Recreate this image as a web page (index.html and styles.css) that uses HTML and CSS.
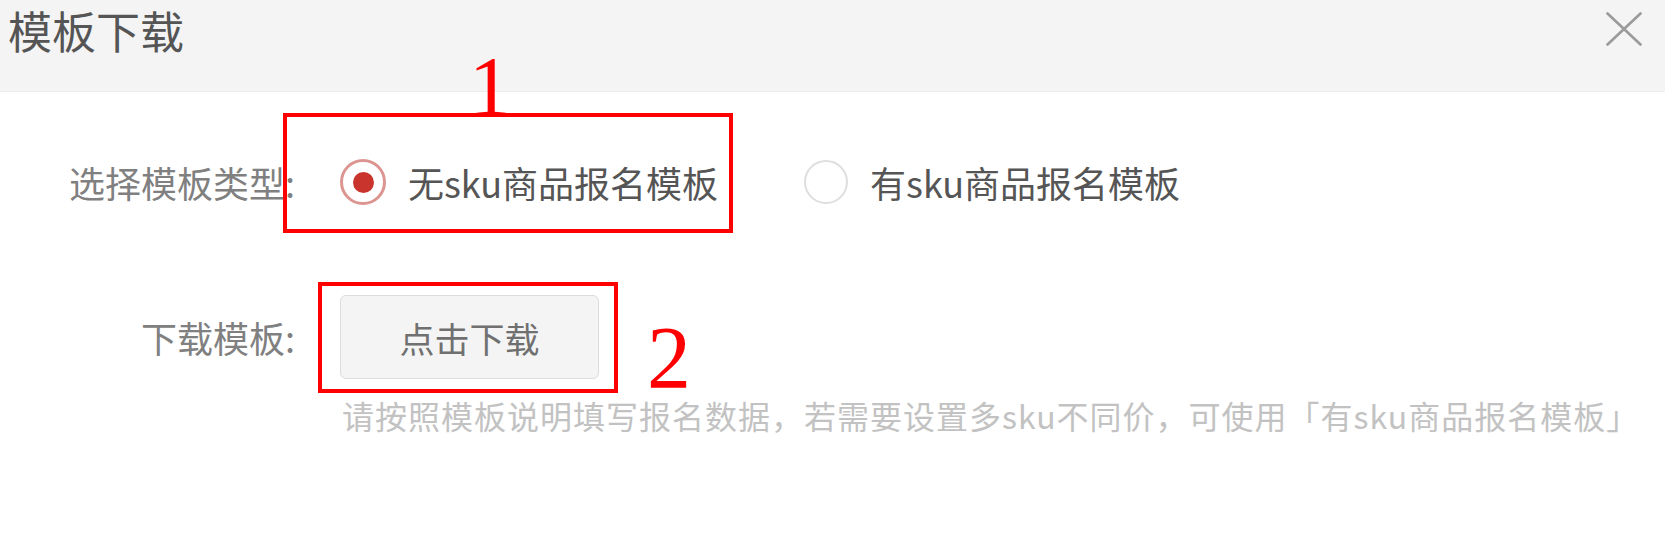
FILE: index.html
```html
<!DOCTYPE html>
<html lang="zh-CN">
<head>
<meta charset="utf-8">
<title>模板下载</title>
<link rel="stylesheet" href="styles.css">
</head>
<body>
<div class="dialog">
  <div class="dialog-header">
    <h1 class="dialog-title">模板下载</h1>
    <button class="close-btn" aria-label="关闭">
      <svg width="36" height="34" viewBox="0 0 36 34"><path d="M1.5 1.5 L34.5 32.5 M34.5 1.5 L1.5 32.5" stroke="#9a9a9a" stroke-width="2.6" fill="none" stroke-linecap="round"/></svg>
    </button>
  </div>
  <div class="dialog-body">
    <div class="form-row row-type">
      <div class="form-label">选择模板类型:</div>
      <div class="form-control radios">
        <label class="radio checked"><span class="radio-circle"><span class="radio-dot"></span></span><span class="radio-text">无sku商品报名模板</span></label>
        <label class="radio"><span class="radio-circle"></span><span class="radio-text">有sku商品报名模板</span></label>
      </div>
    </div>
    <div class="form-row row-download">
      <div class="form-label">下载模板:</div>
      <div class="form-control">
        <button class="download-btn">点击下载</button>
      </div>
    </div>
    <div class="hint">请按照模板说明填写报名数据，若需要设置多sku不同价，可使用「有sku商品报名模板」</div>
  </div>

  <div class="mark-box mark-box-1"></div>
  <div class="mark-num mark-num-1">1</div>
  <div class="mark-box mark-box-2"></div>
  <div class="mark-num mark-num-2">2</div>
</div>
</body>
</html>
```

FILE: styles.css
```css
html, body {
  margin: 0;
  padding: 0;
  background: #ffffff;
}

body {
  font-family: "Noto Sans CJK SC", "Noto Sans", sans-serif;
  color: #555;
}

.dialog {
  position: relative;
  width: 1665px;
  height: 537px;
  overflow: hidden;
}

.dialog-header {
  height: 92px;
  background: #f4f4f4;
  border-bottom: 1px solid #ededed;
  box-sizing: border-box;
  display: flex;
  justify-content: space-between;
  align-items: flex-start;
  padding: 0 23px 0 8px;
}

.dialog-title {
  margin: 0;
  font-size: 44px;
  line-height: 60px;
  font-weight: 400;
  color: #555;
}

.close-btn {
  margin-top: 12px;
  padding: 0;
  border: 0;
  background: none;
  width: 36px;
  height: 34px;
  display: block;
}

.close-btn svg {
  display: block;
}

.dialog-body {
  padding-top: 60px;
}

.form-row {
  display: flex;
  align-items: center;
}

.form-label {
  width: 295px;
  text-align: right;
  font-size: 36px;
  color: #808080;
  flex-shrink: 0;
}

.form-control {
  margin-left: 45px;
}

.row-type {
  height: 60px;
}

.radios {
  display: flex;
  align-items: center;
  gap: 86px;
}

.radio {
  display: flex;
  align-items: center;
  gap: 22px;
}

.radio-circle {
  width: 44px;
  height: 44px;
  border-radius: 50%;
  border: 2px solid #dedede;
  box-sizing: border-box;
  display: flex;
  align-items: center;
  justify-content: center;
}

.radio.checked .radio-circle {
  width: 46px;
  height: 46px;
  border: 3px solid #dc9590;
}

.radio-dot {
  width: 21px;
  height: 21px;
  border-radius: 50%;
  background: #c9352d;
}

.radio-text {
  font-size: 36px;
  color: #555;
  line-height: 46px;
}

.row-download {
  margin-top: 83px;
}

.download-btn {
  width: 259px;
  height: 84px;
  border: 1.5px solid #dcdcdc;
  border-radius: 6px;
  background: #f4f4f4;
  font-family: "Noto Sans CJK SC", "Noto Sans", sans-serif;
  font-size: 35px;
  color: #707070;
  padding: 0;
  display: block;
}

.hint {
  margin: 18px 0 0 342px;
  font-size: 32px;
  line-height: 36px;
  letter-spacing: 1px;
  color: #c2c2c2;
  white-space: nowrap;
}

/* annotation overlays */
.mark-box {
  position: absolute;
  border: 4px solid #ff0000;
  box-sizing: border-box;
  z-index: 2;
}

.mark-box-1 {
  left: 283px;
  top: 113px;
  width: 450px;
  height: 120px;
}

.mark-box-2 {
  left: 318px;
  top: 282px;
  width: 300px;
  height: 111px;
}

.mark-num {
  position: absolute;
  font-family: "Liberation Serif", serif;
  color: #ff0000;
  line-height: 0.6;
  z-index: 1;
}

.mark-num-1 {
  left: 469px;
  top: 62px;
  font-size: 84px;
}

.mark-num-2 {
  left: 647px;
  top: 332px;
  font-size: 88px;
}
```
